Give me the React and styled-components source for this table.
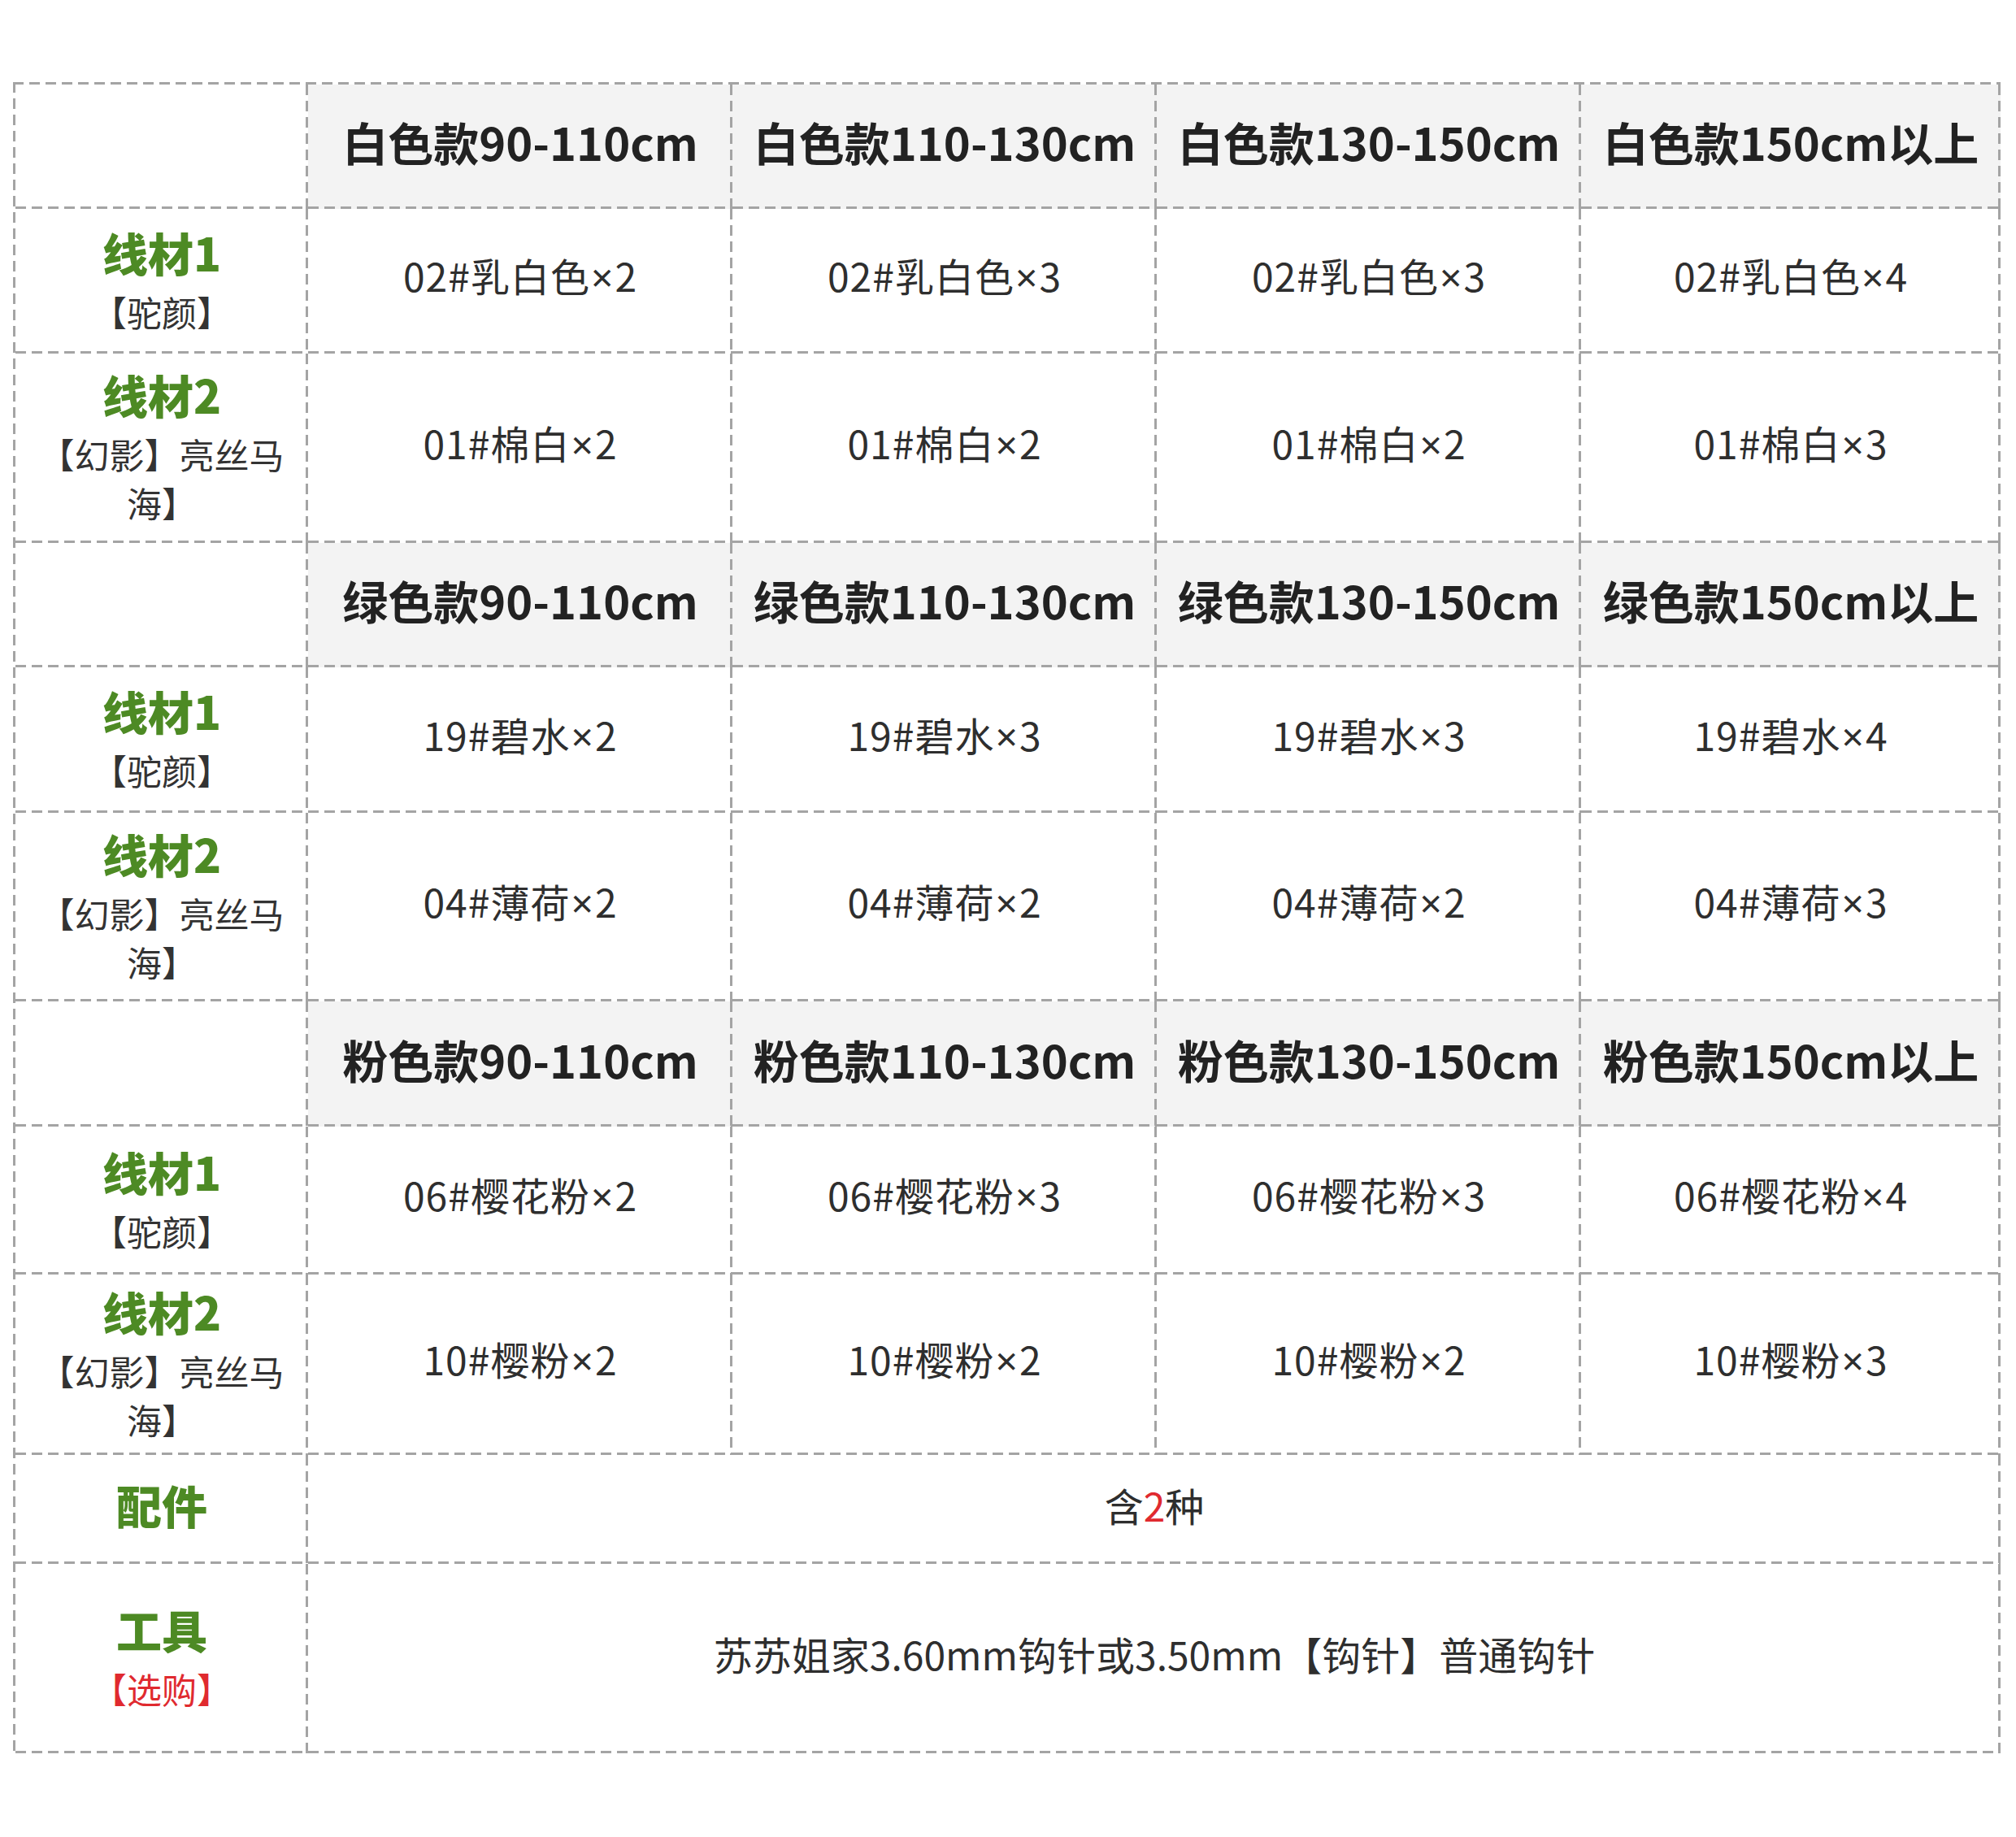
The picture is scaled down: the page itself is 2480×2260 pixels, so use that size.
import React from 'react'
import styled, { createGlobalStyle } from 'styled-components';

const GlobalStyle = createGlobalStyle`
    html, body {
        margin: 0;
        padding: 0;
        background: #ffffff;
    }
    body {
        font-family: "Noto Sans CJK SC", "Noto Sans", sans-serif;
        color: #333333;
        text-spacing-trim: space-all;
    }
`;

const sizes = ['90-110cm', '110-130cm', '130-150cm', '150cm以上'];

const groups = [
    {
        color: '白色',
        yarn1: ['02#乳白色×2', '02#乳白色×3', '02#乳白色×3', '02#乳白色×4'],
        yarn2: ['01#棉白×2', '01#棉白×2', '01#棉白×2', '01#棉白×3'],
    },
    {
        color: '绿色',
        yarn1: ['19#碧水×2', '19#碧水×3', '19#碧水×3', '19#碧水×4'],
        yarn2: ['04#薄荷×2', '04#薄荷×2', '04#薄荷×2', '04#薄荷×3'],
    },
    {
        color: '粉色',
        yarn1: ['06#樱花粉×2', '06#樱花粉×3', '06#樱花粉×3', '06#樱花粉×4'],
        yarn2: ['10#樱粉×2', '10#樱粉×2', '10#樱粉×2', '10#樱粉×3'],
    },
];

// row heights measured off the reference
const rowHeights = [153, 178, 233, 153, 179, 232, 154, 182, 222, 134, 233];

const dash = '#a4a4a4';
const hLine = `repeating-linear-gradient(90deg, ${dash} 0 13px, transparent 13px 20px)`;
const vLine = `repeating-linear-gradient(180deg, ${dash} 0 13px, transparent 13px 20px)`;

// "02#乳白色×2" -> name + small latin times sign + count
const Amount = ({ text }) => {
    const [name, count] = text.split('×');
    return (
        <Value $spaced>
            {name}<Times>×</Times>{count}
        </Value>
    );
};

const App = () => {
    return (
        <Page>
            <GlobalStyle />
            <Table>
                {groups.map((g) => (
                    <React.Fragment key={g.color}>
                        <Cell />
                        {sizes.map((s) => (
                            <Cell key={s} $head>
                                <HeadText>{g.color}款{s}</HeadText>
                            </Cell>
                        ))}

                        <Cell>
                            <Label>线材1</Label>
                            <Sub>【驼颜】</Sub>
                        </Cell>
                        {g.yarn1.map((v, i) => (
                            <Cell key={'a' + i}>
                                <Amount text={v} />
                            </Cell>
                        ))}

                        <Cell>
                            <Label>线材2</Label>
                            <Sub>【幻影】亮丝马海】</Sub>
                        </Cell>
                        {g.yarn2.map((v, i) => (
                            <Cell key={'b' + i}>
                                <Amount text={v} />
                            </Cell>
                        ))}
                    </React.Fragment>
                ))}

                <Cell>
                    <Label>配件</Label>
                </Cell>
                <Cell $span={4}>
                    <Value>含<Red>2</Red>种</Value>
                </Cell>

                <Cell>
                    <Label>工具</Label>
                    <Sub $red>【选购】</Sub>
                </Cell>
                <Cell $span={4}>
                    <Value>苏苏姐家3.60mm钩针或3.50mm【钩针】普通钩针</Value>
                </Cell>
            </Table>
        </Page>
    )
}

const Page = styled.div`
    width: 2480px;
    height: 2260px;
    box-sizing: border-box;
    padding: 101px 19px 0 16px;
    background: #ffffff;
`;

const Table = styled.div`
    display: grid;
    grid-template-columns: 360px 522px 522px 522px 1fr;
    grid-template-rows: ${rowHeights.map((h) => h + 'px').join(' ')};
    padding: 3px 0 0 3px;
    background-image: ${hLine}, ${vLine};
    background-size: 100% 3px, 3px 100%;
    background-position: left top, left top;
    background-repeat: no-repeat;
`;

const Cell = styled.div`
    grid-column: ${(p) => (p.$span ? `span ${p.$span}` : 'auto')};
    display: flex;
    flex-direction: column;
    justify-content: center;
    align-items: center;
    text-align: center;
    padding: 0 10px 13px 10px;
    background-color: ${(p) => (p.$head ? '#f3f3f3' : '#ffffff')};
    background-image: ${hLine}, ${vLine};
    background-size: 100% 3px, 3px 100%;
    background-position: left bottom, right top;
    background-repeat: no-repeat;
    min-width: 0;
`;

const HeadText = styled.div`
    font-size: 56px;
    font-weight: 700;
    line-height: 1.5;
    color: #222222;
    white-space: nowrap;
`;

const Label = styled.div`
    font-size: 56px;
    font-weight: 900;
    line-height: 86px;
    color: #4d8a24;
`;

const Sub = styled.div`
    font-size: 43px;
    line-height: 60px;
    color: ${(p) => (p.$red ? '#e02a2f' : '#333333')};
`;

const Value = styled.div`
    font-size: 48px;
    line-height: 1.5;
    color: #2e2e2e;
    white-space: nowrap;
    letter-spacing: ${(p) => (p.$spaced ? '1px' : '0')};
`;

const Times = styled.span`
    font-family: "Noto Sans", sans-serif;
    margin: 0 1px;
`;

const Red = styled.span`
    color: #e02a2f;
`;

export default App;
